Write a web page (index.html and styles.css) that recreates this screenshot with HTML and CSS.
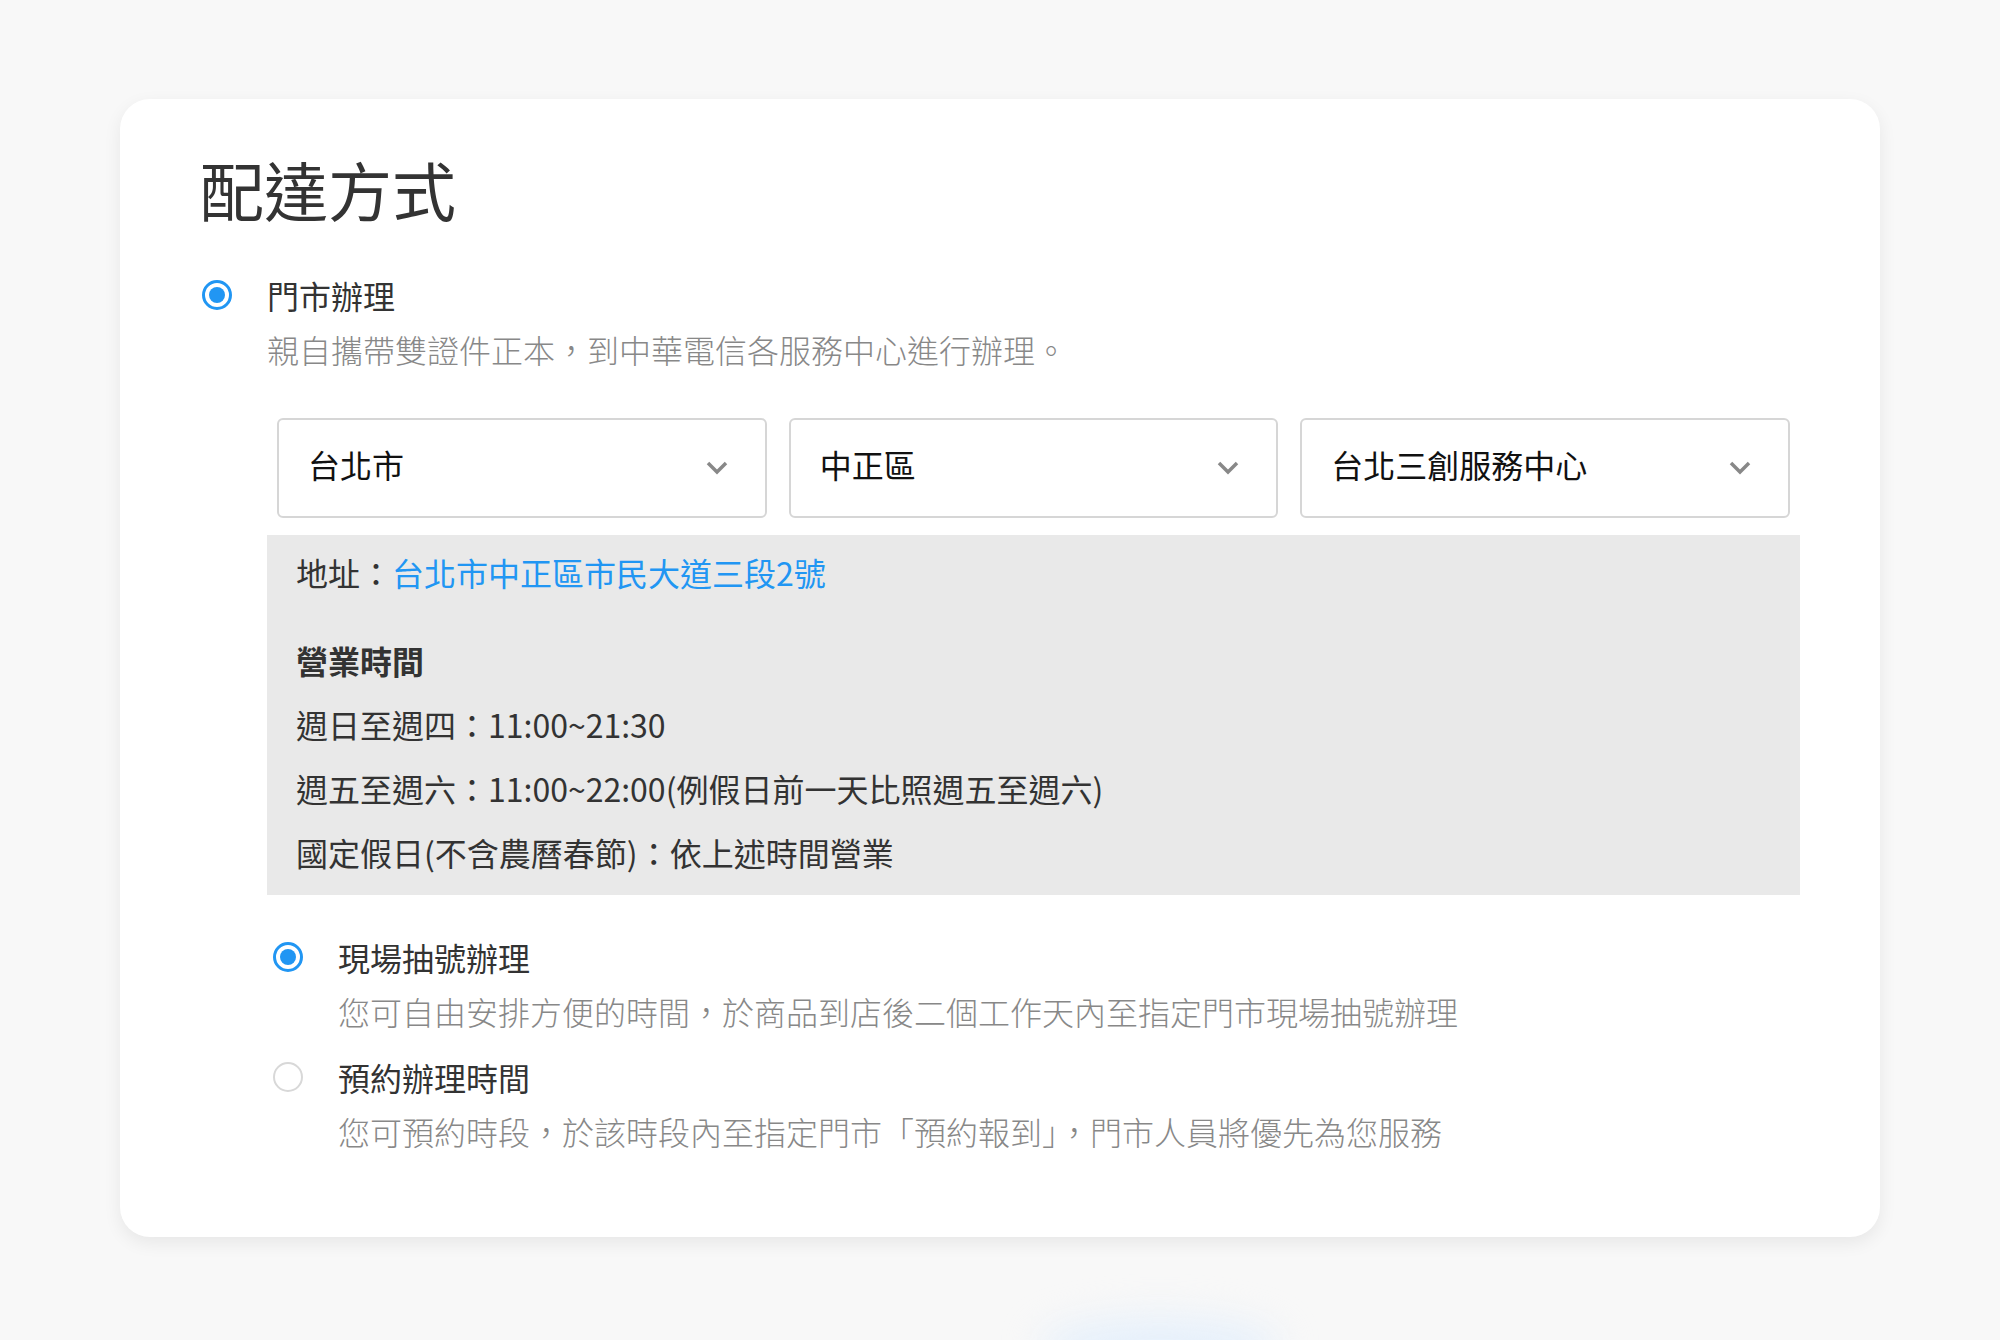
FILE: index.html
```html
<!DOCTYPE html>
<html lang="zh-Hant">
<head>
    <meta charset="UTF-8">
    <meta name="viewport" content="width=device-width, initial-scale=1.0">
    <title>配達方式</title>
    <link rel="stylesheet" href="styles.css">
</head>
<body>
    <div class="card">
        <h1>配達方式</h1>

        <div class="option">
            <span class="radio checked"></span>
            <span class="option-label">門市辦理</span>
        </div>
        <p class="option-desc">親自攜帶雙證件正本，到中華電信各服務中心進行辦理。</p>

        <div class="store-panel">
            <div class="select-row">
                <div class="select">
                    <span>台北市</span>
                    <svg class="chevron" viewBox="0 0 22 14"><path d="M2 2 L11 11 L20 2"/></svg>
                </div>
                <div class="select">
                    <span>中正區</span>
                    <svg class="chevron" viewBox="0 0 22 14"><path d="M2 2 L11 11 L20 2"/></svg>
                </div>
                <div class="select">
                    <span>台北三創服務中心</span>
                    <svg class="chevron" viewBox="0 0 22 14"><path d="M2 2 L11 11 L20 2"/></svg>
                </div>
            </div>

            <div class="info-box">
                <div class="info-line">地址：<a class="address" href="#">台北市中正區市民大道三段2號</a></div>
                <div class="info-title">營業時間</div>
                <div class="info-line">週日至週四：11:00~21:30</div>
                <div class="info-line">週五至週六：11:00~22:00(例假日前一天比照週五至週六)</div>
                <div class="info-line">國定假日(不含農曆春節)：依上述時間營業</div>
            </div>

            <div class="sub-options">
                <div class="option">
                    <span class="radio checked"></span>
                    <span class="option-label">現場抽號辦理</span>
                </div>
                <p class="option-desc">您可自由安排方便的時間，於商品到店後二個工作天內至指定門市現場抽號辦理</p>

                <div class="option second">
                    <span class="radio"></span>
                    <span class="option-label">預約辦理時間</span>
                </div>
                <p class="option-desc">您可預約時段，於該時段內至指定門市「預約報到」，門市人員將優先為您服務</p>
            </div>
        </div>
    </div>

    <div class="glow"></div>
</body>
</html>
```

FILE: styles.css
```css
body {
    margin: 0;
    padding: 99px 0 0;
    background: #f8f8f8;
    font-family: "Noto Sans CJK TC", "Noto Sans", sans-serif;
    color: #333;
}

.card {
    width: 1760px;
    box-sizing: border-box;
    margin: 0 auto;
    padding: 51px 80px 84px;
    background: #fff;
    border-radius: 30px;
    box-shadow: 0 6px 18px rgba(0, 0, 0, 0.07);
}

h1 {
    margin: 0 0 46px;
    font-size: 64px;
    line-height: 77px;
    font-weight: 400;
    color: #333;
}

.option {
    display: flex;
    align-items: center;
    height: 44px;
}

.radio {
    width: 30px;
    height: 30px;
    box-sizing: border-box;
    border-radius: 50%;
    border: 2px solid #d8d8d8;
    margin: 0 35px 0 2px;
    flex-shrink: 0;
    position: relative;
    background: #fff;
}

.radio.checked {
    border: 3px solid #2196f3;
}

.radio.checked::after {
    content: "";
    position: absolute;
    left: 4px;
    top: 4px;
    width: 16px;
    height: 16px;
    border-radius: 50%;
    background: #2196f3;
}

.option-label {
    font-size: 32px;
    line-height: 44px;
    color: #333;
}

.option-desc {
    margin: 10px 0 0 67px;
    font-size: 32px;
    line-height: 44px;
    font-weight: 300;
    color: #888;
}

.store-panel {
    margin: 47px 0 0 67px;
}

.select-row {
    display: flex;
    gap: 22px;
    padding: 0 10px;
}

.select {
    flex: 1;
    height: 100px;
    box-sizing: border-box;
    border: 2px solid #d6d6d6;
    border-radius: 6px;
    padding: 0 37px 8px 29px;
    display: flex;
    align-items: center;
    justify-content: space-between;
    font-size: 32px;
    color: #111;
}

.chevron {
    width: 22px;
    height: 14px;
    margin-top: 8px;
    fill: none;
    stroke: #888;
    stroke-width: 3.5;
}

.info-box {
    margin-top: 17px;
    padding: 5px 29px 11px;
    background: #e9e9e9;
    font-size: 32px;
    line-height: 64px;
    color: #333;
}

.info-title {
    margin-top: 24px;
    font-weight: 700;
}

.address {
    color: #2196f3;
    text-decoration: none;
}

.sub-options {
    margin: 40px 0 0 4px;
}

.sub-options .option.second {
    margin-top: 22px;
}

.glow {
    width: 240px;
    height: 60px;
    margin: 80px 0 0 1040px;
    border-radius: 50%;
    background: #e6f0fb;
    filter: blur(18px);
}
```
